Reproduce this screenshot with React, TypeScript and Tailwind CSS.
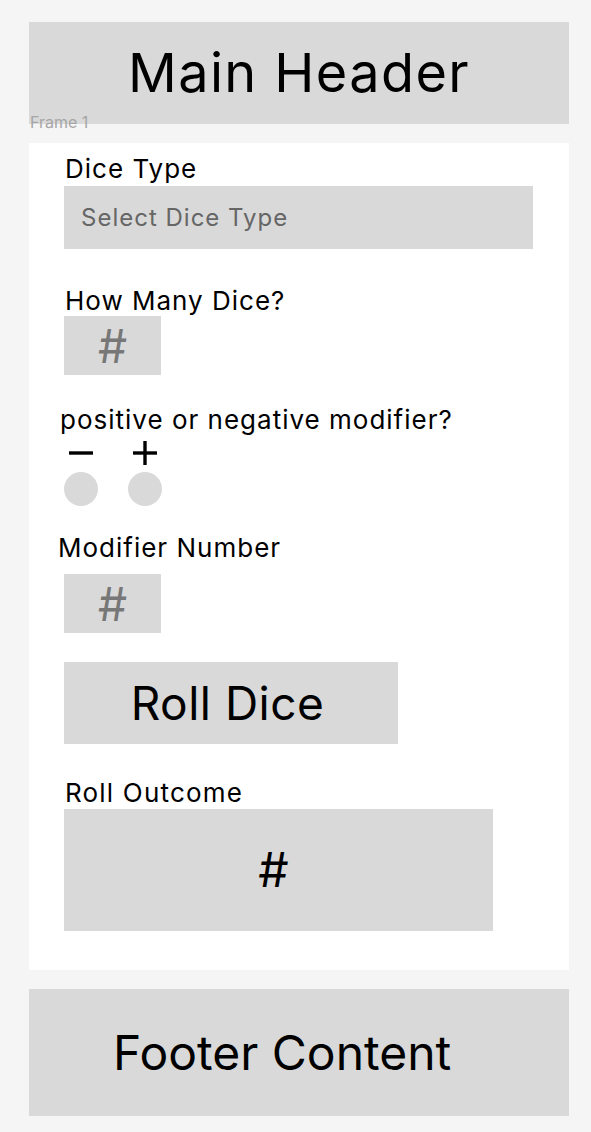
import { useState } from 'react';

function NumBox({ className = '' }: { className?: string }) {
  return (
    <div
      className={
        'flex h-[59px] w-[97px] items-center justify-center bg-[#d9d9d9] text-[46px] leading-none text-[#777777] ' +
        className
      }
    >
      #
    </div>
  );
}

function SignIcon({ plus }: { plus: boolean }) {
  return (
    <svg width="26" height="26" viewBox="0 0 26 26" className="text-black">
      <line x1="1" y1="13" x2="25" y2="13" stroke="currentColor" strokeWidth="3.4" />
      {plus && <line x1="13" y1="1" x2="13" y2="25" stroke="currentColor" strokeWidth="3.4" />}
    </svg>
  );
}

export default function App() {
  const [sign, setSign] = useState<'-' | '+' | null>(null);

  return (
    <div className="min-h-[1132px] w-[591px] bg-[#f5f5f5] pt-[22px] pr-[22px] pb-[16px] pl-[29px] font-['Inter',sans-serif] text-black">
      {/* шапка + подпись фрейма поверх неё */}
      <div className="relative">
        <header className="flex h-[102px] items-center justify-center bg-[#d9d9d9] text-[54px] leading-none tracking-[1.4px]">
          Main Header
        </header>
        <span className="absolute top-[92px] left-[1px] text-[16px] leading-none text-[#a6a6a6]">
          Frame 1
        </span>
      </div>

      <main className="mt-[19px] flex h-[827px] flex-col bg-white">
        <div className="mt-[11px] ml-[36px] text-[26px] leading-[29px] tracking-[1px]">Dice Type</div>
        <div className="mt-[3px] ml-[35px] flex h-[63px] w-[469px] items-center bg-[#d9d9d9] pl-[17px] text-[24px] tracking-[1px] text-[#666666]">
          Select Dice Type
        </div>

        <div className="mt-[37px] ml-[36px] text-[26px] leading-[29px] tracking-[1px]">How Many Dice?</div>
        <NumBox className="mt-[1px] ml-[35px]" />

        <div className="mt-[30px] ml-[31px] text-[26px] leading-[29px] tracking-[1px]">
          positive or negative modifier?
        </div>
        <div className="ml-[35px] flex gap-[30px]">
          {(['-', '+'] as const).map((s) => (
            <button
              key={s}
              type="button"
              onClick={() => setSign(s)}
              className="flex w-[34px] flex-col items-center"
            >
              <span className="flex h-[38px] items-center">
                <SignIcon plus={s === '+'} />
              </span>
              <span
                className={
                  'h-[34px] w-[34px] rounded-full ' +
                  (sign === s ? 'bg-[#b0b0b0]' : 'bg-[#d9d9d9]')
                }
              />
            </button>
          ))}
        </div>

        <div className="mt-[27px] ml-[29px] text-[26px] leading-[29px] tracking-[1px]">Modifier Number</div>
        <NumBox className="mt-[12px] ml-[35px]" />

        <button
          type="button"
          className="mt-[29px] ml-[35px] flex h-[82px] w-[334px] items-center justify-center bg-[#d9d9d9] pr-[7px] text-[46px] leading-none tracking-[0.5px]"
        >
          Roll Dice
        </button>

        <div className="mt-[34px] ml-[36px] text-[26px] leading-[29px] tracking-[1.2px]">Roll Outcome</div>
        <div className="mt-[2px] ml-[35px] flex h-[122px] w-[429px] items-center justify-center bg-[#d9d9d9] pr-[10px] text-[48px] leading-none">
          #
        </div>
      </main>

      <footer className="mt-[19px] flex h-[127px] items-center bg-[#d9d9d9] pl-[84px] text-[48px] leading-none">
        Footer Content
      </footer>
    </div>
  );
}
